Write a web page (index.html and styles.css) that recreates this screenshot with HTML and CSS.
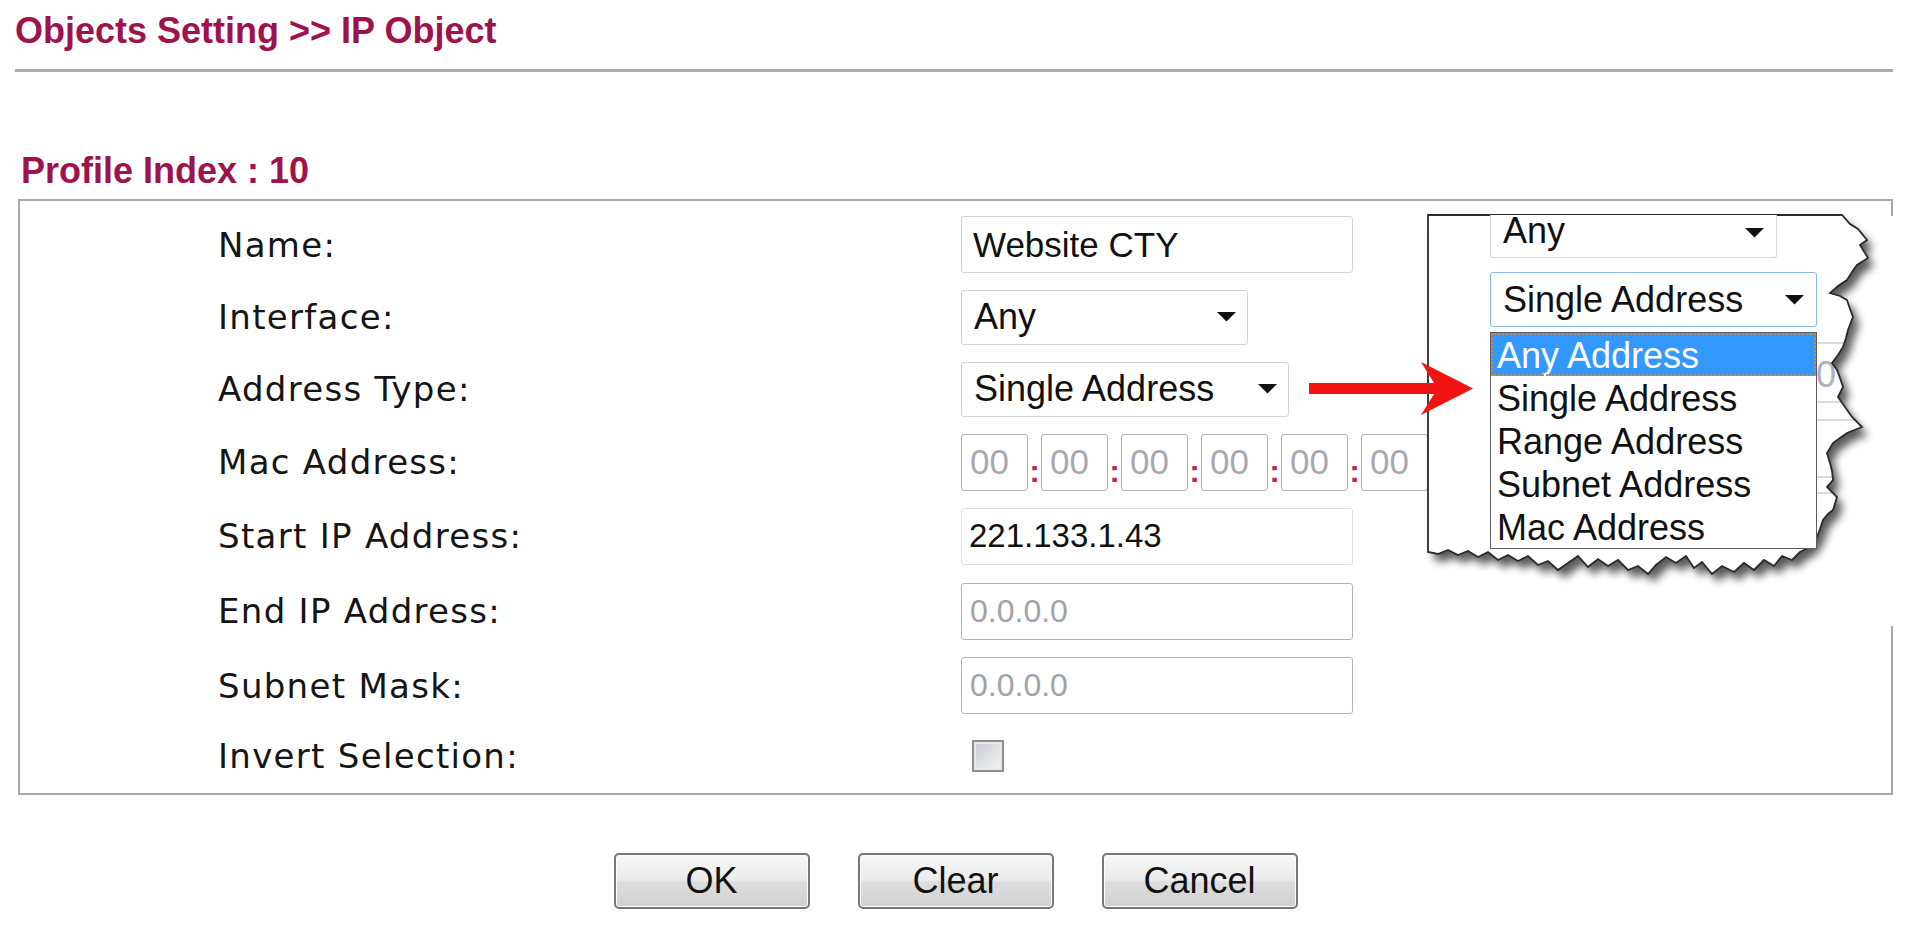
FILE: index.html
```html
<!DOCTYPE html>
<html lang="en">
<head>
    <meta charset="UTF-8">
    <meta name="viewport" content="width=device-width, initial-scale=1.0">
    <title>Objects Setting - IP Object</title>
    <link rel="stylesheet" href="styles.css">
</head>
<body>
    <div class="page">
        <h1 class="page-title">Objects Setting &gt;&gt; IP Object</h1>
        <hr class="title-rule">

        <h2 class="profile-title">Profile Index : 10</h2>
        <form class="profile-box" id="ip-object">
            <div class="form-grid">
                <label class="field-label" for="name">Name:</label>
                <div class="field">
                    <input class="text-box name-box" id="name" type="text" value="Website CTY">
                </div>

                <label class="field-label">Interface:</label>
                <div class="field">
                    <div class="select-box iface-select">
                        <span>Any</span>
                        <svg class="select-arrow" viewBox="0 0 19 10"><path d="M0 0H19L9.5 9.5Z"/></svg>
                    </div>
                </div>

                <label class="field-label">Address Type:</label>
                <div class="field">
                    <div class="select-box type-select">
                        <span>Single Address</span>
                        <svg class="select-arrow" viewBox="0 0 19 10"><path d="M0 0H19L9.5 9.5Z"/></svg>
                    </div>
                </div>

                <label class="field-label">Mac Address:</label>
                <div class="field mac-row">
                    <input class="mac-box" type="text" value="00"><span class="mac-sep">:</span>
                    <input class="mac-box" type="text" value="00"><span class="mac-sep">:</span>
                    <input class="mac-box" type="text" value="00"><span class="mac-sep">:</span>
                    <input class="mac-box" type="text" value="00"><span class="mac-sep">:</span>
                    <input class="mac-box" type="text" value="00"><span class="mac-sep">:</span>
                    <input class="mac-box" type="text" value="00">
                </div>

                <label class="field-label" for="start-ip">Start IP Address:</label>
                <div class="field">
                    <input class="text-box ip-box start-box" id="start-ip" type="text" value="221.133.1.43">
                </div>

                <label class="field-label" for="end-ip">End IP Address:</label>
                <div class="field">
                    <input class="text-box ip-box is-off" id="end-ip" type="text" value="0.0.0.0">
                </div>

                <label class="field-label" for="mask">Subnet Mask:</label>
                <div class="field">
                    <input class="text-box ip-box is-off" id="mask" type="text" value="0.0.0.0">
                </div>

                <label class="field-label">Invert Selection:</label>
                <div class="field">
                    <span class="check-box"></span>
                </div>
            </div>
        </form>

        <div class="actions">
            <button class="btn" type="button">OK</button>
            <button class="btn" type="button">Clear</button>
            <button class="btn" type="button">Cancel</button>
        </div>
    </div>

    <!-- torn-paper zoom of the open Address Type list -->
    <svg class="callout-paper" viewBox="1400 200 520 440">
        <defs>
            <filter id="paper-shadow" x="-10%" y="-10%" width="130%" height="130%">
                <feGaussianBlur in="SourceAlpha" stdDeviation="4.5"/>
                <feOffset dx="6" dy="8" result="blur"/>
                <feComponentTransfer><feFuncA type="linear" slope="0.65"/></feComponentTransfer>
                <feMerge><feMergeNode/><feMergeNode in="SourceGraphic"/></feMerge>
            </filter>
            <clipPath id="paper-clip">
                <path id="paper-edge" d="M1428,215 L1842,215 L1850,224 L1858,229 L1867,240 L1860,245 L1868,258 L1857,265 L1852,272 L1847,280 L1838,286 L1830,293 L1840,296 L1847,300 L1850,309 L1853,317 L1848,330 L1846,338 L1843,347 L1838,355 L1832,363 L1837,370 L1840,378 L1843,387 L1838,397 L1845,407 L1852,417 L1862,427 L1847,433 L1840,438 L1833,443 L1827,453 L1830,463 L1832,471 L1833,480 L1827,487 L1837,497 L1833,510 L1828,514 L1823,520 L1820,529 L1817,537 L1810,547 L1800,552 L1792,560 L1782,556 L1774,566 L1764,560 L1754,570 L1744,563 L1734,572 L1722,566 L1712,574 L1702,562 L1694,568 L1686,556 L1676,563 L1666,557 L1656,565 L1648,574 L1638,566 L1628,570 L1618,560 L1608,566 L1598,559 L1588,567 L1578,556 L1568,563 L1558,570 L1548,561 L1538,565 L1528,556 L1518,561 L1508,555 L1498,560 L1488,552 L1478,557 L1468,551 L1458,555 L1448,550 L1438,554 L1428,552 Z"/>
            </clipPath>
        </defs>
        <rect x="1878" y="216" width="22" height="410" fill="#fff"/>
        <use href="#paper-edge" fill="#fff" filter="url(#paper-shadow)"/>
        <g clip-path="url(#paper-clip)" stroke="#cfcfcf" stroke-width="1.5">
            <line x1="1817" y1="343" x2="1870" y2="343"/>
            <line x1="1817" y1="402" x2="1870" y2="402"/>
            <line x1="1817" y1="420" x2="1870" y2="420"/>
            <line x1="1817" y1="477" x2="1870" y2="477"/>
            <line x1="1817" y1="493" x2="1870" y2="493"/>
            <text x="1816" y="387" stroke="none" fill="#aeb0c0" font-family="Liberation Sans, Arial, sans-serif" font-size="36">0</text>
        </g>
        <use href="#paper-edge" fill="none" stroke="#2a2a2a" stroke-width="1.8"/>
    </svg>

    <div class="callout">
        <div class="zoom-select zoom-any">
            <span class="zoom-value">Any</span>
            <svg class="select-arrow" viewBox="0 0 19 10"><path d="M0 0H19L9.5 9.5Z"/></svg>
        </div>
        <div class="zoom-select zoom-single">
            <span>Single Address</span>
            <svg class="select-arrow" viewBox="0 0 19 10"><path d="M0 0H19L9.5 9.5Z"/></svg>
        </div>
        <ul class="zoom-list">
            <li class="zoom-option is-active">Any Address</li>
            <li class="zoom-option">Single Address</li>
            <li class="zoom-option">Range Address</li>
            <li class="zoom-option">Subnet Address</li>
            <li class="zoom-option">Mac Address</li>
        </ul>
    </div>

    <svg class="pointer-arrow" viewBox="1300 355 180 70">
        <path d="M1309,383 H1434 L1421,362 L1473,388.5 L1421,415 L1434,394 H1309 Z" fill="#f21212"/>
    </svg>
</body>
</html>
```

FILE: styles.css
```css
* {
    margin: 0;
    padding: 0;
    box-sizing: border-box;
}

body {
    background: #fff;
    font-family: "Liberation Sans", Arial, sans-serif;
    color: #111;
    overflow: hidden;
}

.page {
    padding-left: 15px;
}

.page-title {
    padding-top: 10px;
    font-size: 36px;
    line-height: 41px;
    font-weight: bold;
    color: #9e124d;
}

.title-rule {
    width: 1878px;
    height: 3px;
    margin-top: 18px;
    border: 0;
    background: #ababab;
}

.profile-title {
    margin-top: 79px;
    padding-left: 6px;
    font-size: 36px;
    line-height: 40px;
    font-weight: bold;
    color: #9e124d;
}

.profile-box {
    width: 1875px;
    margin: 8px 0 0 3px;
    padding: 7px 0 3px 198px;
    border: 2px solid #a8a8a8;
}

.form-grid {
    display: grid;
    grid-template-columns: 743px auto;
    grid-template-rows: 73px 72px 72px 74px 74px 76px 73px 68px;
    align-items: center;
}

.field-label {
    font-family: "DejaVu Sans", Verdana, sans-serif;
    font-size: 34px;
    letter-spacing: 1.3px;
    color: #151515;
}

.field {
    display: flex;
    align-items: center;
}

.text-box {
    width: 392px;
    height: 57px;
    padding-left: 11px;
    border: 1px solid #d2d2d2;
    border-radius: 3px;
    background: #fff;
    font: 35px "Liberation Sans", Arial, sans-serif;
    color: #111;
    outline: none;
}

.ip-box {
    font-size: 33px;
    padding-left: 8px;
}

.start-box {
    border-color: #d9e0e8;
    padding-left: 7px;
}

.is-off {
    border-color: #b4b4b4;
    color: #a2a2a8;
    font-size: 32px;
}

.select-box {
    display: flex;
    align-items: center;
    justify-content: space-between;
    height: 55px;
    padding: 0 11px 0 12px;
    border: 1px solid #d2d2d2;
    border-radius: 3px;
    background: #fff;
    font-size: 36px;
}

.iface-select {
    width: 287px;
}

.type-select {
    width: 328px;
}

.select-arrow {
    width: 19px;
    height: 10px;
    fill: #111;
    flex-shrink: 0;
}

.mac-row {
    height: 57px;
}

.mac-box {
    width: 67px;
    height: 57px;
    padding-left: 8px;
    border: 1px solid #b0b0b0;
    border-radius: 3px;
    background: #fff;
    font: 35px "Liberation Sans", Arial, sans-serif;
    color: #a8a8b0;
    outline: none;
}

.mac-sep {
    width: 13px;
    padding-top: 18px;
    text-align: center;
    font-size: 32px;
    font-weight: bold;
    color: #c81e5e;
}

.check-box {
    width: 32px;
    height: 32px;
    margin-left: 11px;
    border: 2px solid #8e8e8e;
    background: linear-gradient(135deg, #c4c8d0, #f6f6f6);
    box-shadow: inset 0 0 0 2px #e8e8e8;
}

.actions {
    display: flex;
    justify-content: center;
    gap: 48px;
    width: 1875px;
    margin: 58px 0 0 3px;
}

.btn {
    width: 196px;
    height: 56px;
    border: 2px solid #777;
    border-radius: 5px;
    background: linear-gradient(#f6f6f6 0%, #ececec 48%, #dedede 52%, #d0d0d0 100%);
    box-shadow: inset 0 0 0 1px #fbfbfb;
    font: 36px "Liberation Sans", Arial, sans-serif;
    color: #111;
}

/* zoomed dropdown overlay */
.callout-paper {
    position: absolute;
    left: 1400px;
    top: 200px;
    width: 520px;
    height: 440px;
}

.callout {
    position: absolute;
    left: 1428px;
    top: 215px;
    width: 414px;
    height: 338px;
}

.zoom-select {
    position: absolute;
    left: 62px;
    display: flex;
    align-items: center;
    justify-content: space-between;
    width: 327px;
    height: 55px;
    padding: 0 12px 0 12px;
    border: 1px solid #d6d6d6;
    border-radius: 3px;
    background: #fff;
    font-size: 36px;
}

.zoom-any {
    top: 0;
    width: 287px;
    height: 43px;
    align-items: flex-start;
    padding-top: 3px;
    border-top: 0;
    border-radius: 0 0 3px 3px;
}

.zoom-any .select-arrow {
    margin-top: 10px;
}

.zoom-value {
    display: block;
    height: 26px;
    line-height: 26px;
}

.zoom-single {
    top: 57px;
    border-color: #86b8e8;
}

.zoom-list {
    position: absolute;
    left: 62px;
    top: 117px;
    width: 327px;
    list-style: none;
    border: 1px solid #5c5c5c;
    background: #fff;
}

.zoom-option {
    height: 43px;
    line-height: 45px;
    padding-left: 6px;
    font-size: 36px;
    color: #111;
}

.zoom-option.is-active {
    background: #3399ff;
    color: #fff;
    outline: 2px dotted #c8894a;
    outline-offset: -2px;
}

.pointer-arrow {
    position: absolute;
    left: 1300px;
    top: 355px;
    width: 180px;
    height: 70px;
}
```
